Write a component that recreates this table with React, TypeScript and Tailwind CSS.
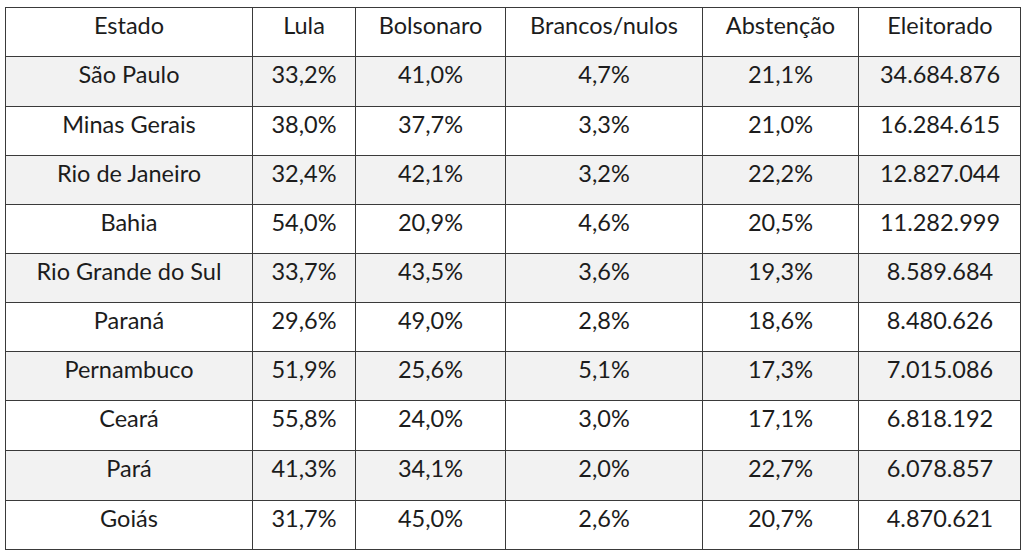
import React from "react";

const header = ["Estado", "Lula", "Bolsonaro", "Brancos/nulos", "Abstenção", "Eleitorado"];
const rows: string[][] = [
  ["São Paulo", "33,2%", "41,0%", "4,7%", "21,1%", "34.684.876"],
  ["Minas Gerais", "38,0%", "37,7%", "3,3%", "21,0%", "16.284.615"],
  ["Rio de Janeiro", "32,4%", "42,1%", "3,2%", "22,2%", "12.827.044"],
  ["Bahia", "54,0%", "20,9%", "4,6%", "20,5%", "11.282.999"],
  ["Rio Grande do Sul", "33,7%", "43,5%", "3,6%", "19,3%", "8.589.684"],
  ["Paraná", "29,6%", "49,0%", "2,8%", "18,6%", "8.480.626"],
  ["Pernambuco", "51,9%", "25,6%", "5,1%", "17,3%", "7.015.086"],
  ["Ceará", "55,8%", "24,0%", "3,0%", "17,1%", "6.818.192"],
  ["Pará", "41,3%", "34,1%", "2,0%", "22,7%", "6.078.857"],
  ["Goiás", "31,7%", "45,0%", "2,6%", "20,7%", "4.870.621"],
];

function Row({ cells, shaded, tall }: { cells: string[]; shaded: boolean; tall: boolean }) {
  return (
    <div
      className={`grid grid-cols-[247px_103px_150px_197px_156px_162px] border-b border-[#3a3a3a] ${
        tall ? "h-[50px]" : "h-[49px]"
      } ${shaded ? "bg-[#f2f2f2]" : "bg-white"}`}
    >
      {cells.map((c, i) => (
        <div
          key={i}
          className={`flex justify-center pt-[4px] text-[23.5px] leading-[26px] text-[#1c1c1c] ${
            i < 5 ? "border-r border-[#3a3a3a]" : ""
          }`}
        >
          {c}
        </div>
      ))}
    </div>
  );
}

export default function App() {
  const tallRows = [0, 7, 8];
  return (
    <div className="w-[1024px] h-[555px] bg-white pt-[7px] pl-[5px]" style={{ fontFamily: "Lato, 'Open Sans', sans-serif" }}>
      <div className="w-[1016px] border-t border-l border-r border-[#3a3a3a]">
        <Row cells={header} shaded={false} tall={false} />
        {rows.map((r, i) => (
          <Row key={i} cells={r} shaded={i % 2 === 0} tall={tallRows.includes(i)} />
        ))}
      </div>
    </div>
  );
}
